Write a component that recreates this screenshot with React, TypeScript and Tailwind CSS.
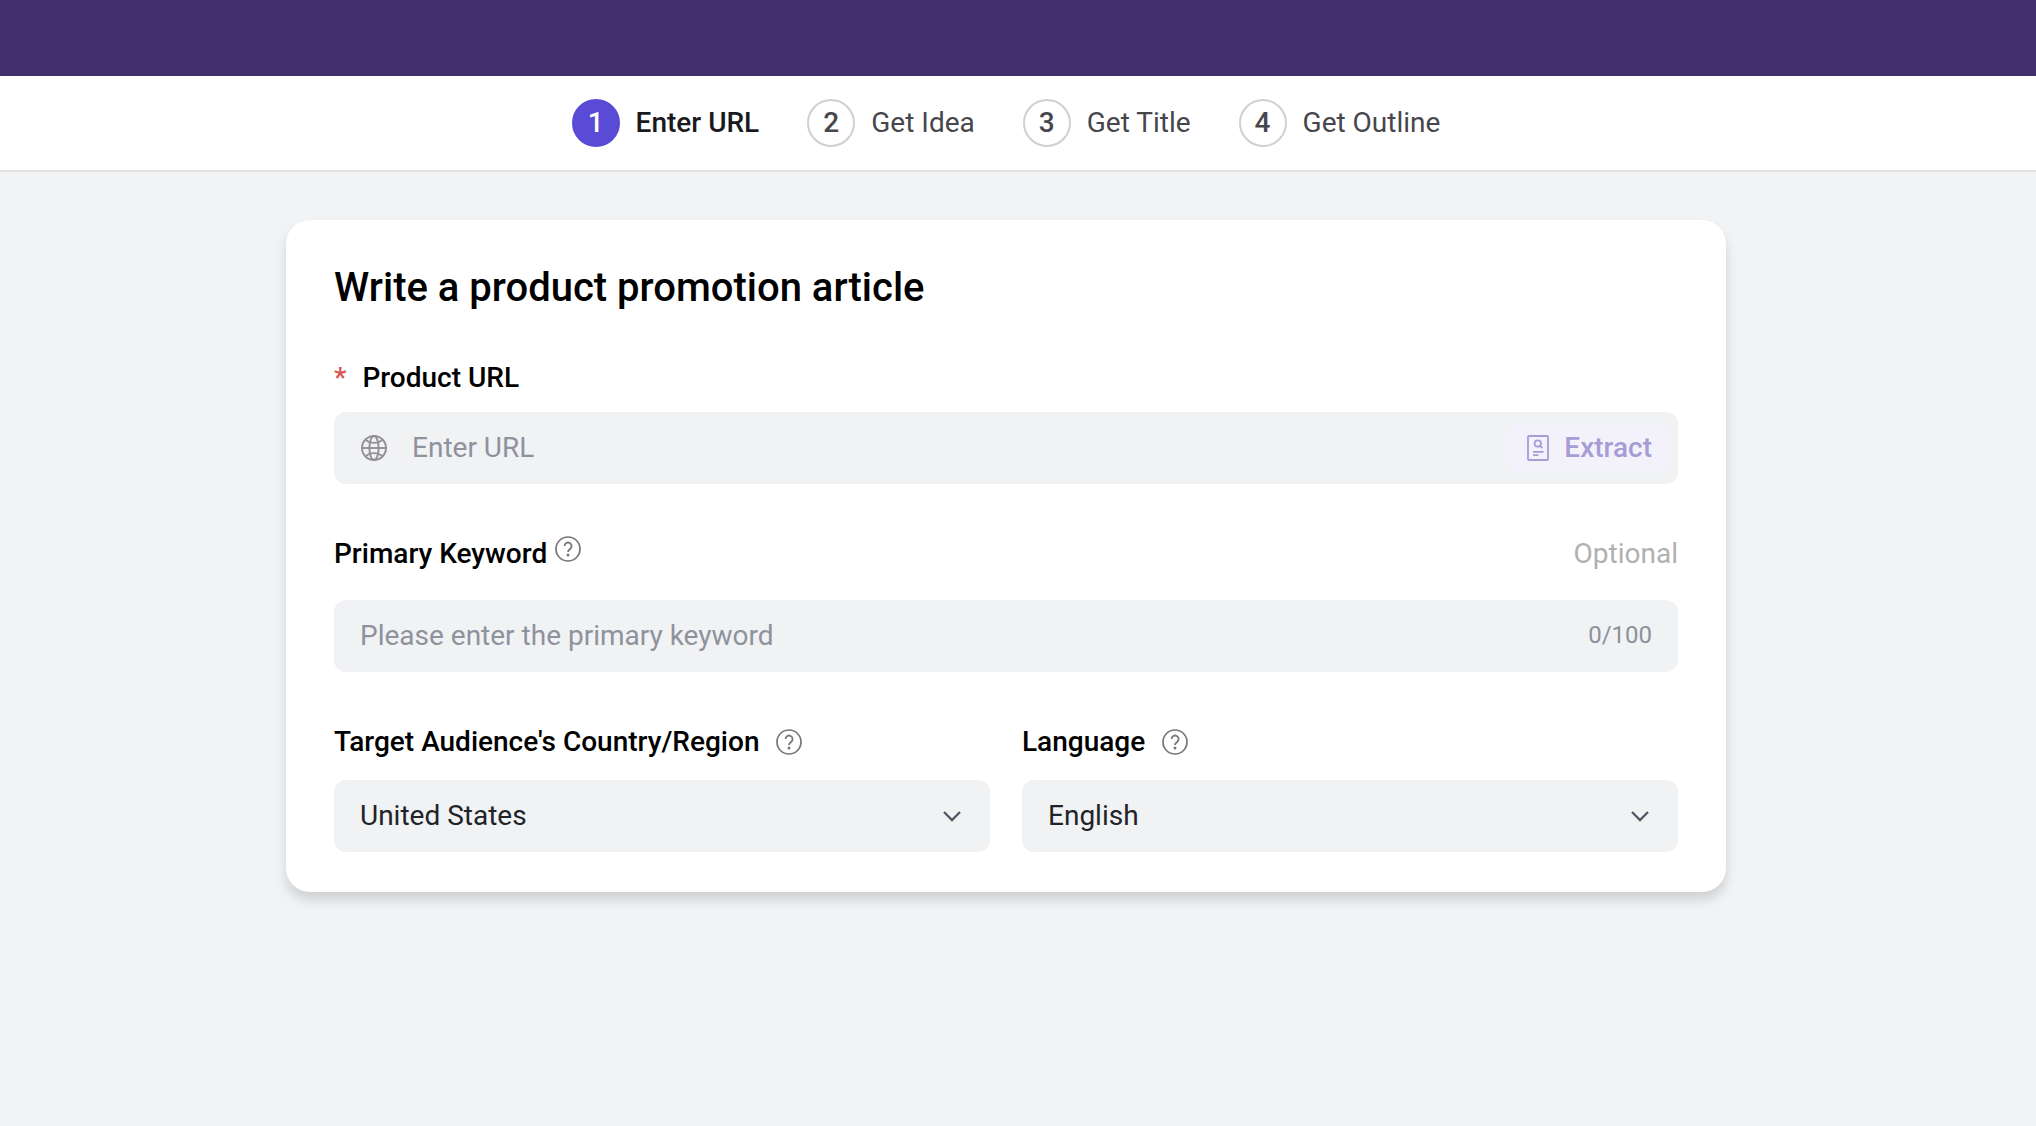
import {useState} from 'react'

const steps = ['Enter URL', 'Get Idea', 'Get Title', 'Get Outline']

function HelpIcon() {
  return (
    <svg viewBox="0 0 26 26" className="h-[26px] w-[26px] text-[#77777c]" fill="none" stroke="currentColor" aria-hidden="true">
      <circle cx="13" cy="13" r="12" strokeWidth="1.7" />
      <path d="M9.6 10a3.500 3.500 0 1 1 5.500 2.900c-1.400 1-2.100 1.600-2.100 3.200" strokeWidth="1.8" />
      <circle cx="13" cy="19" r="1.500" fill="currentColor" stroke="none" />
    </svg>
  )
}

function GlobeIcon() {
  return (
    <svg viewBox="0 0 26 26" className="h-[26px] w-[26px] shrink-0 text-[#918f97]" fill="none" stroke="currentColor" strokeWidth="1.9" aria-hidden="true">
      <circle cx="13" cy="13" r="12" />
      <ellipse cx="13" cy="13" rx="4.600" ry="12" />
      <path d="M1 13h24" />
      <path d="M4.500 4.600c2.300 2.200 5.200 3.300 8.500 3.300s6.200-1.100 8.500-3.300M4.500 21.400c2.300-2.200 5.200-3.300 8.500-3.300s6.200 1.100 8.500 3.300" />
    </svg>
  )
}

function ExtractIcon() {
  return (
    <svg viewBox="0 0 22 26" className="h-[26px] w-[22px]" fill="none" stroke="currentColor" strokeWidth="1.8" aria-hidden="true">
      <rect x="1" y="1" width="20" height="24" rx="1" />
      <circle cx="10.800" cy="8.500" r="3.200" />
      <path d="M13 10.800l2.400 2.400M6 16.800h10.500M6 20.200h5.500" />
    </svg>
  )
}

function Step({ index, label, active }: { index: number; label: string; active: boolean }) {
  return (
    <li className="flex items-center gap-4" aria-current={active ? 'step' : undefined}>
      <span
        className={`flex h-12 w-12 items-center justify-center rounded-full border-2 font-medium ${
          active ? 'border-[#5a4bd6] bg-[#5a4bd6] text-white' : 'border-[#cfcfd4] text-[#47464d]'
        }`}
      >
        {index}
      </span>
      <span className={active ? 'font-medium text-[#1a1a1e]' : 'text-[#47464d]'}>{label}</span>
    </li>
  )
}

function SelectField({ id, label, options }: { id: string; label: string; options: string[] }) {
  return (
    <div>
      <div className="flex items-center gap-[17px]">
        <label htmlFor={id} className="font-medium">{label}</label>
        <HelpIcon />
      </div>
      <div className="mt-5 grid items-center">
        <select
          id={id}
          className="col-start-1 row-start-1 h-[72px] w-full appearance-none rounded-xl bg-[#f1f2f4] px-[26px] text-[#212329] outline-none"
        >
          {options.map((o) => (
            <option key={o}>{o}</option>
          ))}
        </select>
        <svg
          viewBox="0 0 18 12"
          className="pointer-events-none col-start-1 row-start-1 mr-[29px] h-3 w-[18px] justify-self-end text-[#505560]"
          fill="none"
          stroke="currentColor"
          strokeWidth="2.3"
          aria-hidden="true"
        >
          <path d="M1 2l8 8 8-8" />
        </svg>
      </div>
    </div>
  )
}

const inputCls = 'h-full min-w-0 flex-1 bg-transparent pb-0.5 outline-none placeholder:text-[#8e929c]'

export default function App() {
  const [url, setUrl] = useState('')
  const [keyword, setKeyword] = useState('')

  return (
    <div className="min-h-screen bg-[#f1f3f5] font-['Roboto',sans-serif] text-[28px] leading-9 text-black">
      <header className="h-[76px] bg-[#432f6d]" />

      <nav className="border-b-2 border-[#e1e2e4] bg-white py-[23px] pr-6">
        <ol className="flex justify-center gap-12">
          {steps.map((label, i) => (
            <Step key={label} index={i + 1} label={label} active={i === 0} />
          ))}
        </ol>
      </nav>

      <main className="py-12 pr-6">
        <form
          className="mx-auto max-w-[1440px] rounded-3xl bg-white px-12 pt-11 pb-10 shadow-[0_8px_12px_rgba(0,0,0,0.14)]"
          onSubmit={(e) => e.preventDefault()}
        >
          <h1 className="text-[40px] leading-12 font-medium">Write a product promotion article</h1>

          <div className="mt-12 flex">
            <span className="mr-4 font-medium text-[#d9534f]">*</span>
            <label htmlFor="url" className="font-medium">Product URL</label>
          </div>
          <div className="mt-4 flex h-[72px] items-center gap-[25px] rounded-xl bg-[#f1f2f4] pr-2 pl-[27px]">
            <GlobeIcon />
            <input
              id="url"
              value={url}
              onChange={(e) => setUrl(e.target.value)}
              placeholder="Enter URL"
              className={inputCls}
            />
            <button
              type="button"
              disabled={!url}
              className="flex h-12 items-center gap-[15px] rounded-lg bg-[#f3f2fb] pr-[18px] pl-5 font-medium text-[#a79dd6]"
            >
              <ExtractIcon />
              Extract
            </button>
          </div>

          <div className="mt-[52px] flex justify-between">
            <div className="flex items-start gap-2">
              <label htmlFor="keyword" className="font-medium">Primary Keyword</label>
              <HelpIcon />
            </div>
            <span className="text-[#b0b0b2]">Optional</span>
          </div>
          <div className="mt-7 flex h-[72px] items-center rounded-xl bg-[#f1f2f4] px-[26px]">
            <input
              id="keyword"
              value={keyword}
              maxLength={100}
              onChange={(e) => setKeyword(e.target.value)}
              placeholder="Please enter the primary keyword"
              className={inputCls}
            />
            <span className="pb-0.5 text-2xl text-[#8b909b]">{keyword.length}/100</span>
          </div>

          <div className="mt-[52px] grid grid-cols-2 gap-8">
            <SelectField
              id="country"
              label="Target Audience's Country/Region"
              options={['United States', 'United Kingdom', 'Canada', 'Australia']}
            />
            <SelectField id="language" label="Language" options={['English', 'Spanish', 'French', 'German']} />
          </div>
        </form>
      </main>
    </div>
  )
}
